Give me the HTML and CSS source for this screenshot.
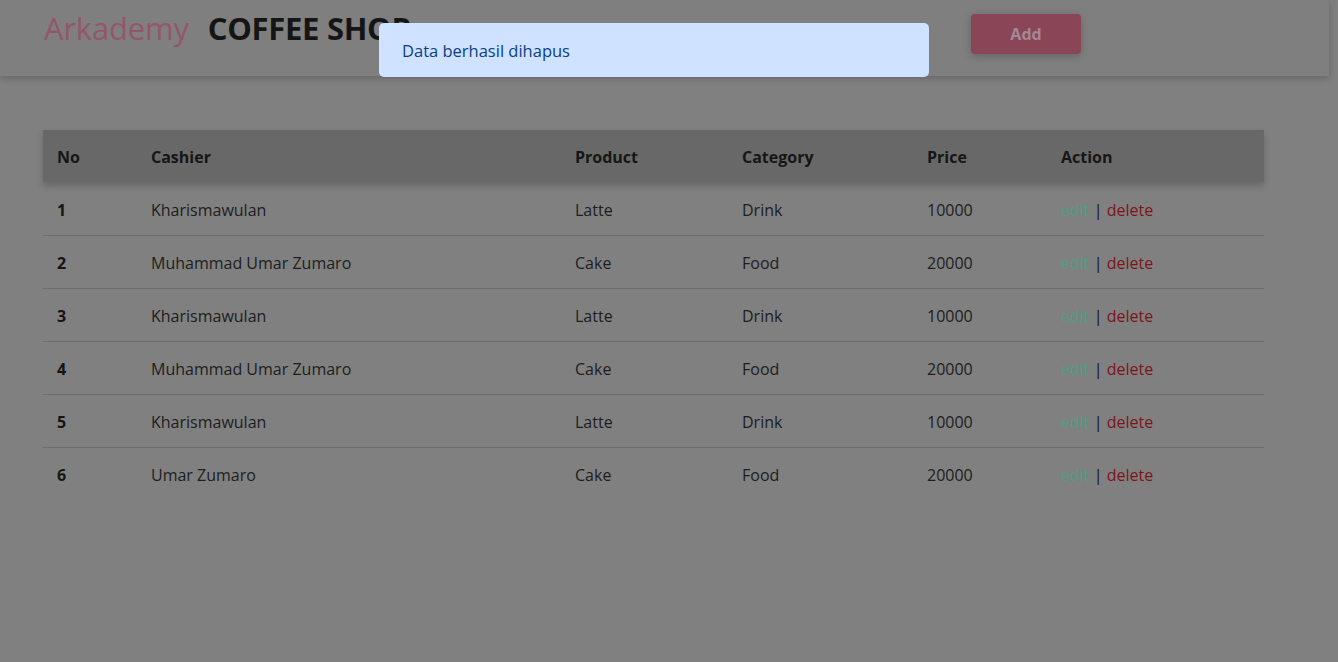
FILE: index.html
```html
<!DOCTYPE html>
<html lang="id">
<head>
<meta charset="utf-8">
<title>Arkademy Coffee Shop</title>
<link rel="stylesheet" href="styles.css">
</head>
<body>
<header class="topbar">
  <div class="brand">
    <span class="brand-name">Arkademy</span>
    <span class="brand-title">COFFEE SHOP</span>
  </div>
  <button class="btn-add" type="button">Add</button>
</header>

<main class="content">
  <table class="data-table">
    <thead>
      <tr>
        <th class="col-no">No</th>
        <th class="col-cashier">Cashier</th>
        <th class="col-product">Product</th>
        <th class="col-category">Category</th>
        <th class="col-price">Price</th>
        <th class="col-action">Action</th>
      </tr>
    </thead>
    <tbody>
      <tr><td class="num">1</td><td>Kharismawulan</td><td>Latte</td><td>Drink</td><td>10000</td><td><a class="edit">edit</a> <span class="sep">|</span> <a class="delete">delete</a></td></tr>
      <tr><td class="num">2</td><td>Muhammad Umar Zumaro</td><td>Cake</td><td>Food</td><td>20000</td><td><a class="edit">edit</a> <span class="sep">|</span> <a class="delete">delete</a></td></tr>
      <tr><td class="num">3</td><td>Kharismawulan</td><td>Latte</td><td>Drink</td><td>10000</td><td><a class="edit">edit</a> <span class="sep">|</span> <a class="delete">delete</a></td></tr>
      <tr><td class="num">4</td><td>Muhammad Umar Zumaro</td><td>Cake</td><td>Food</td><td>20000</td><td><a class="edit">edit</a> <span class="sep">|</span> <a class="delete">delete</a></td></tr>
      <tr><td class="num">5</td><td>Kharismawulan</td><td>Latte</td><td>Drink</td><td>10000</td><td><a class="edit">edit</a> <span class="sep">|</span> <a class="delete">delete</a></td></tr>
      <tr><td class="num">6</td><td>Umar Zumaro</td><td>Cake</td><td>Food</td><td>20000</td><td><a class="edit">edit</a> <span class="sep">|</span> <a class="delete">delete</a></td></tr>
    </tbody>
  </table>
</main>

<div class="alert" role="alert">Data berhasil dihapus</div>
</body>
</html>
```

FILE: styles.css
```css
* { box-sizing: border-box; }

html, body {
  margin: 0;
  padding: 0;
}

body {
  background: #808080;
  font-family: "Open Sans", "Noto Sans", sans-serif;
  color: #1d1d1d;
  min-height: 662px;
}

.topbar {
  width: 1329px;
  height: 76px;
  background: #7f7f7f;
  box-shadow: 0 2px 7px rgba(0, 0, 0, 0.22);
  display: flex;
  align-items: flex-start;
  padding-left: 44px;
}

.brand {
  flex: 0 0 927px;
  display: flex;
  align-items: baseline;
  gap: 19px;
  padding-top: 6px;
  line-height: 44px;
}

.brand-name {
  font-size: 31px;
  color: #93566b;
  letter-spacing: -0.2px;
}

.brand-title {
  font-size: 31px;
  font-weight: 700;
  color: #151515;
  letter-spacing: -0.3px;
}

.btn-add {
  margin-top: 14px;
  width: 110px;
  height: 40px;
  border: none;
  border-radius: 4px;
  background: #8a4657;
  color: #a48893;
  font-family: inherit;
  font-weight: 700;
  font-size: 16px;
  box-shadow: 0 2px 8px rgba(0, 0, 0, 0.22);
}

.content {
  padding: 54px 0 0 43px;
}

.data-table {
  width: 1221px;
  border-collapse: collapse;
  font-size: 16px;
}

.data-table th,
.data-table td {
  text-align: left;
  padding: 0 0 0 14px;
}

.data-table thead tr {
  background: #686868;
  box-shadow: 0 4px 7px rgba(0, 0, 0, 0.2);
}

.data-table th {
  height: 52px;
  padding-top: 1px;
  font-weight: 700;
  color: #161616;
}

.data-table td {
  height: 53px;
  padding-top: 3px;
  border-bottom: 1px solid #6e6e6e;
}

.data-table tbody tr:last-child td {
  border-bottom: none;
}

.col-no { width: 94px; }
.col-cashier { width: 424px; }
.col-product { width: 167px; }
.col-category { width: 185px; }
.col-price { width: 134px; }
.col-action { width: 217px; }

.data-table td.num {
  font-weight: 700;
  color: #141414;
}

.edit { color: #529c80; }
.delete { color: #7c141b; }
.sep { color: #121212; }

.alert {
  position: fixed;
  top: 23px;
  left: 379px;
  width: 550px;
  height: 54px;
  display: flex;
  align-items: center;
  padding: 0 23px;
  background: #cfe2ff;
  color: #0a3f86;
  border-radius: 5px;
  font-size: 16.5px;
}
```
